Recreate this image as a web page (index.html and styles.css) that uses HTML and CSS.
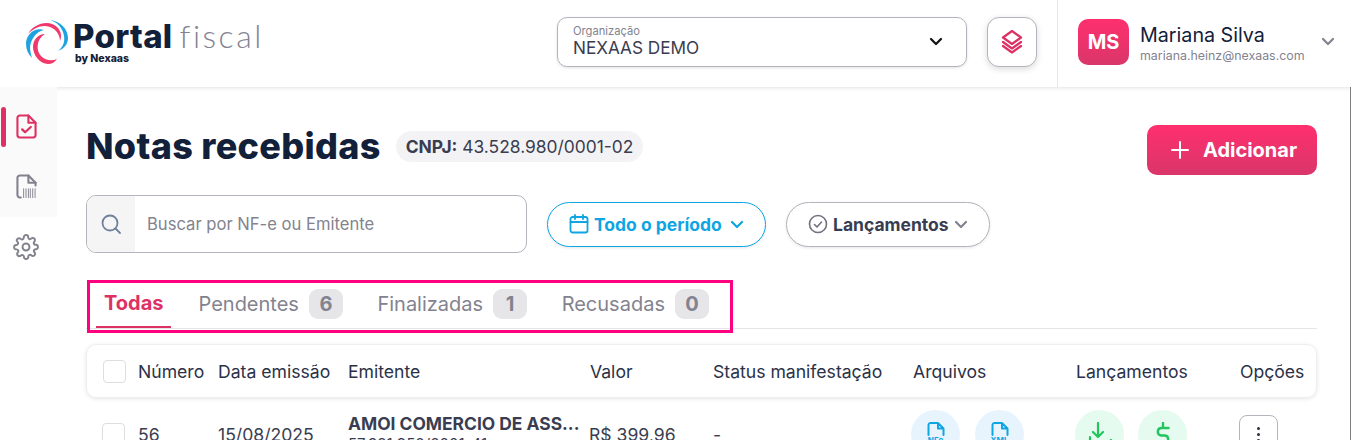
FILE: index.html
```html
<!DOCTYPE html>
<html lang="pt-BR">
<head>
    <meta charset="UTF-8">
    <meta name="viewport" content="width=device-width, initial-scale=1.0">
    <title>Portal Fiscal - Notas recebidas</title>
    <link rel="stylesheet" href="styles.css">
</head>
<body>

    <header class="topbar">
        <div class="logo">
            <svg class="logo-mark" width="46" height="48" viewBox="24 17 46 48">
                <path fill="#f0386b" d="M28 33C34 22 50 18 58 27C61 31 62 35 60 40C60 34 56 28 50 26C42 23 34 27 28 33z"/>
                <path fill="#1fa3e0" d="M50 19C60 20 68 28 68 37C68 43 64 48 58 50C63 46 65 41 64 35C63 27 57 21 50 19z"/>
                <path fill="#1fa3e0" d="M44 29C34 26 26 34 26 43C26 48 28 53 32 57C30 50 29 45 32 39C35 33 39 30 44 29z"/>
                <path fill="#f0386b" d="M45 33C38 33 33 39 33 46C33 54 40 63 48 63C52 63 55 61 57 58C52 60 46 60 41 55C36 50 36 38 45 33z"/>
            </svg>
            <div class="logo-text">
                <div class="logo-name"><span class="logo-portal">Portal</span><span class="logo-fiscal">fiscal</span></div>
                <div class="logo-by">by Nexaas</div>
            </div>
        </div>

        <div class="org-select">
            <div class="org-text">
                <span class="org-label">Organização</span>
                <span class="org-value">NEXAAS DEMO</span>
            </div>
            <svg width="14" height="9" viewBox="0 0 14 9" fill="none" stroke="#111" stroke-width="2.2" stroke-linecap="round" stroke-linejoin="round"><path d="M2 2l5 5 5-5"/></svg>
        </div>

        <button class="layers-btn">
            <svg width="26" height="25" viewBox="0 0 24 25" fill="none" stroke="#de3163" stroke-width="2.200" stroke-linejoin="round" stroke-linecap="round">
                <path d="M12 2l9 6.500-9 6.500-9-6.500z"/>
                <path d="M3 13l9 6.500 9-6.500"/>
                <path d="M3 17l9 6.500 9-6.500"/>
            </svg>
        </button>

        <div class="user">
            <div class="avatar">MS</div>
            <div class="user-text">
                <div class="user-name">Mariana Silva</div>
                <div class="user-mail">mariana.heinz@nexaas.com</div>
            </div>
            <svg width="14" height="9" viewBox="0 0 14 9" fill="none" stroke="#83838f" stroke-width="2.2" stroke-linecap="round" stroke-linejoin="round"><path d="M2 2l5 5 5-5"/></svg>
        </div>
    </header>

    <div class="layout">
        <nav class="sidebar">
            <div class="side-item active">
                <svg width="21" height="25" viewBox="0 0 22 26" fill="none" stroke="#de3163" stroke-width="2.200" stroke-linecap="round" stroke-linejoin="round">
                    <path d="M13 1.500H4A2.500 2.500 0 0 0 1.500 4v18A2.500 2.500 0 0 0 4 24.500h14a2.500 2.500 0 0 0 2.500-2.500V9z"/>
                    <path d="M13 1.500V9h7.500"/>
                    <path d="M6.500 16l3 3 6-5.500" stroke-width="2.400"/>
                </svg>
            </div>
            <div class="side-item">
                <svg width="21" height="25" viewBox="0 0 22 26" fill="none" stroke="#83838f" stroke-width="2.200" stroke-linecap="round" stroke-linejoin="round">
                    <path d="M5 24.500H4A2.500 2.500 0 0 1 1.500 22V4A2.500 2.500 0 0 1 4 1.500h9L20.500 9v3"/>
                    <path d="M13 1.500V9h7.500"/>
                    <path d="M8 15v10M10.500 15v10M13 15v10M15 15v10M17.500 15v10M20 15v10" stroke-width="1" stroke-linecap="butt"/>
                </svg>
            </div>
            <div class="side-item">
                <svg width="26" height="26" viewBox="0 0 24 24" fill="none" stroke="#83838f" stroke-width="1.800" stroke-linecap="round" stroke-linejoin="round">
                    <circle cx="12" cy="12" r="3.200"/>
                    <path d="M19.400 15a1.650 1.650 0 0 0 .33 1.820l.06.060a2 2 0 1 1-2.830 2.830l-.06-.060a1.650 1.650 0 0 0-2.800 1.170V21a2 2 0 1 1-4 0v-.090a1.650 1.650 0 0 0-2.820-1.110l-.06.060a2 2 0 1 1-2.830-2.830l.06-.060a1.650 1.650 0 0 0-1.170-2.800H3a2 2 0 1 1 0-4h.090a1.650 1.650 0 0 0 1.110-2.820l-.06-.060a2 2 0 1 1 2.830-2.830l.06.060a1.650 1.650 0 0 0 1.820.33H9a1.650 1.650 0 0 0 1-1.510V3a2 2 0 1 1 4 0v.090a1.650 1.650 0 0 0 2.800 1.170l.06-.060a2 2 0 1 1 2.830 2.830l-.06.060a1.650 1.650 0 0 0-.33 1.820V9a1.650 1.650 0 0 0 1.510 1H21a2 2 0 1 1 0 4h-.090a1.650 1.650 0 0 0-1.510 1z"/>
                </svg>
            </div>
        </nav>

        <main class="content">
            <div class="title-row">
                <h1>Notas recebidas</h1>
                <span class="cnpj"><b>CNPJ:</b> 43.528.980/0001-02</span>
                <button class="add-btn">
                    <svg width="18" height="18" viewBox="0 0 18 18" stroke="#fff" stroke-width="2" stroke-linecap="round"><path d="M9 1v16M1 9h16"/></svg>
                    Adicionar
                </button>
            </div>

            <div class="filters">
                <div class="search">
                    <div class="search-icon">
                        <svg width="22" height="22" viewBox="0 0 22 22" fill="none" stroke="#71809a" stroke-width="1.800" stroke-linecap="round"><circle cx="10" cy="10" r="7.500"/><path d="M15.500 15.500l4.500 4.500"/></svg>
                    </div>
                    <span class="search-text">Buscar por NF-e ou Emitente</span>
                </div>
                <button class="pill pill-blue">
                    <svg width="20" height="20" viewBox="0 0 20 20" fill="none" stroke="#0ea5e2" stroke-width="1.800" stroke-linecap="round" stroke-linejoin="round"><rect x="1.500" y="3" width="17" height="15.500" rx="2"/><path d="M1.500 8h17M6 1v4M14 1v4"/></svg>
                    Todo o período
                    <svg class="pill-caret" width="14" height="9" viewBox="0 0 14 9" fill="none" stroke="#0ea5e2" stroke-width="2.200" stroke-linecap="round" stroke-linejoin="round"><path d="M2 2l5 5 5-5"/></svg>
                </button>
                <button class="pill pill-gray">
                    <svg width="20" height="20" viewBox="0 0 20 20" fill="none" stroke="#71717f" stroke-width="1.600" stroke-linecap="round" stroke-linejoin="round"><circle cx="10" cy="10" r="8.500"/><path d="M6.500 10.500l2.500 2.500 4.500-5"/></svg>
                    Lançamentos
                    <svg width="14" height="9" viewBox="0 0 14 9" fill="none" stroke="#83838f" stroke-width="2.200" stroke-linecap="round" stroke-linejoin="round"><path d="M2 2l5 5 5-5"/></svg>
                </button>
            </div>

            <div class="tabs-line">
                <div class="tabs">
                    <div class="tab active">Todas</div>
                    <div class="tab">Pendentes <span class="count">6</span></div>
                    <div class="tab">Finalizadas <span class="count">1</span></div>
                    <div class="tab">Recusadas <span class="count">0</span></div>
                </div>
            </div>

            <div class="table-head row">
                <div class="c-check"><span class="checkbox"></span></div>
                <div class="c-num">Número</div>
                <div class="c-date">Data emissão</div>
                <div class="c-issuer">Emitente</div>
                <div class="c-value">Valor</div>
                <div class="c-status">Status manifestação</div>
                <div class="c-files">Arquivos</div>
                <div class="c-launch">Lançamentos</div>
                <div class="c-opts">Opções</div>
            </div>

            <div class="table-row row">
                <div class="c-check"><span class="checkbox"></span></div>
                <div class="c-num">56</div>
                <div class="c-date">15/08/2025</div>
                <div class="c-issuer">
                    <div class="issuer-name">AMOI COMERCIO DE ASS...</div>
                    <div class="issuer-doc">57.981.950/0001-41</div>
                </div>
                <div class="c-value">R$ 399,96</div>
                <div class="c-status">-</div>
                <div class="c-files">
                    <span class="round round-blue">
                        <svg width="18" height="14" viewBox="0 0 18 14" fill="none" stroke="#0ea5e2" stroke-width="2" stroke-linejoin="round" stroke-linecap="round"><path d="M1.500 13V3A2 2 0 0 1 3.500 1H11l5.500 5.500V13M11 1v5.500h5.500"/></svg>
                        <span class="file-tag">NFe</span>
                    </span>
                    <span class="round round-blue">
                        <svg width="18" height="14" viewBox="0 0 18 14" fill="none" stroke="#0ea5e2" stroke-width="2" stroke-linejoin="round" stroke-linecap="round"><path d="M1.500 13V3A2 2 0 0 1 3.500 1H11l5.500 5.500V13M11 1v5.500h5.500"/></svg>
                        <span class="file-tag">XML</span>
                    </span>
                </div>
                <div class="c-launch">
                    <span class="round round-green">
                        <svg width="24" height="26" viewBox="0 0 24 26" fill="none" stroke="#22c55e" stroke-width="2.200" stroke-linecap="round" stroke-linejoin="round"><path d="M10 1v14M5 10l5 5 5-5M2 15v6h9M15 21l3 3 5-6"/></svg>
                    </span>
                    <span class="round round-green">
                        <svg width="14" height="26" viewBox="0 0 14 26" fill="none" stroke="#22c55e" stroke-width="2.400" stroke-linecap="round" stroke-linejoin="round"><path d="M7 1v4M7 21v4M12.500 6H5a3.800 3.800 0 0 0 0 7.500h4a3.800 3.800 0 0 1 0 7.500H1.500"/></svg>
                    </span>
                </div>
                <div class="c-opts">
                    <button class="more-btn"><span></span><span></span><span></span></button>
                </div>
            </div>
        </main>
    </div>

</body>
</html>
```

FILE: styles.css
```css
* {
    box-sizing: border-box;
}
html, body {
    height: 440px;
    overflow: hidden;
}
body {
    margin: 0;
    font-family: Inter, Arial, sans-serif;
    color: #2b2f42;
    background: #fff;
}
button {
    font-family: inherit;
    cursor: pointer;
}

/* header */
.topbar {
    height: 87px;
    display: flex;
    align-items: center;
    background: #fff;
    box-shadow: 0 1px 4px rgba(0, 0, 0, 0.12);
    position: relative;
}
.logo {
    width: 557px;
    padding-left: 24px;
    padding-bottom: 4px;
    display: flex;
    align-items: center;
    gap: 3px;
}
.logo-name {
    display: flex;
    align-items: baseline;
    gap: 7px;
    line-height: 34px;
}
.logo-portal {
    font-weight: 800;
    font-size: 33px;
    letter-spacing: 0.3px;
    color: #12203a;
}
.logo-fiscal {
    font-family: Lato, sans-serif;
    font-weight: 300;
    font-size: 32px;
    letter-spacing: 2.500px;
    color: #83838f;
}
.logo-by {
    font-weight: 800;
    font-size: 10.500px;
    line-height: 12px;
    margin-left: 2px;
    color: #12203a;
}
.org-select {
    width: 410px;
    height: 50px;
    margin-bottom: 4px;
    border: 1px solid #b4b4bc;
    border-radius: 10px;
    box-shadow: 0 1px 3px rgba(0, 0, 0, 0.12);
    padding: 0 23px 0 15px;
    display: flex;
    align-items: center;
    justify-content: space-between;
}
.org-text {
    display: flex;
    flex-direction: column;
}
.org-label {
    font-size: 11.200px;
    line-height: 13px;
    color: #83838f;
}
.org-value {
    font-size: 17.200px;
    line-height: 20px;
    color: #3a3d50;
}
.layers-btn {
    width: 50px;
    height: 50px;
    margin-left: 20px;
    margin-bottom: 4px;
    background: #fff;
    border: 1px solid #b4b4bc;
    border-radius: 12px;
    box-shadow: 0 2px 6px rgba(0, 0, 0, 0.15);
    display: flex;
    align-items: center;
    justify-content: center;
    padding: 0;
}
.user {
    margin-left: 20px;
    height: 87px;
    flex: 1;
    border-left: 1px solid #e6e6e9;
    padding-left: 20px;
    padding-bottom: 4px;
    display: flex;
    align-items: center;
}
.avatar {
    width: 51px;
    height: 46px;
    border-radius: 10px;
    background: linear-gradient(180deg, #ff2f6e, #d9366a);
    color: #fff;
    font-weight: 700;
    font-size: 20px;
    display: flex;
    align-items: center;
    justify-content: center;
}
.user-text {
    margin-left: 11px;
    width: 181px;
    padding-top: 4px;
}
.user-name {
    font-size: 19.700px;
    line-height: 23px;
    color: #12203a;
}
.user-mail {
    font-size: 12.400px;
    line-height: 17px;
    color: #83838f;
}

/* page */
.layout {
    display: flex;
    height: 353px;
    border-right: 1px solid #7f7f7f;
}
.sidebar {
    width: 57px;
    height: 130px;
    flex-shrink: 0;
    background: #fafafa;
    position: relative;
}
.side-item {
    display: flex;
    justify-content: center;
    padding-right: 5px;
    height: 60px;
}
.side-item:first-child {
    padding-top: 27px;
    height: 87px;
}
.side-item.active::before {
    content: "";
    position: absolute;
    left: 1px;
    top: 20px;
    width: 5px;
    height: 40px;
    border-radius: 3px;
    background: #de3163;
}
.content {
    flex: 1;
    padding: 38px 33px 0 29px;
}
.title-row {
    display: flex;
    align-items: center;
    height: 50px;
}
h1 {
    margin: 0 0 8px;
    font-weight: 800;
    font-size: 36px;
    letter-spacing: 0.300px;
    color: #12203a;
}
.cnpj {
    margin-left: 15px;
    margin-bottom: 8px;
    background: #f3f3f5;
    border-radius: 16px;
    height: 31px;
    padding: 0 10px;
    font-size: 17.400px;
    line-height: 31px;
    color: #3a3d50;
}
.add-btn {
    margin-left: auto;
    width: 170px;
    height: 50px;
    border: none;
    border-radius: 10px;
    background: linear-gradient(180deg, #ff2f6e, #d9366a);
    color: #fff;
    font-weight: 700;
    font-size: 20px;
    display: flex;
    align-items: center;
    justify-content: center;
    gap: 14px;
    padding: 0 0 0 4px;
}
.filters {
    display: flex;
    align-items: center;
    margin-top: 20px;
}
.search {
    width: 441px;
    height: 58px;
    border: 1px solid #b4b4bc;
    border-radius: 10px;
    display: flex;
    align-items: center;
    overflow: hidden;
}
.search-icon {
    width: 48px;
    height: 100%;
    background: #f5f5f6;
    display: flex;
    align-items: center;
    justify-content: center;
}
.search-text {
    margin-left: 12px;
    font-size: 16.600px;
    color: #83838f;
}
.pill {
    height: 45px;
    border-radius: 23px;
    background: #fff;
    font-weight: 700;
    font-size: 17.500px;
    display: flex;
    align-items: center;
    padding: 0;
    box-shadow: 0 1px 3px rgba(0, 0, 0, 0.1);
}
.pill-blue {
    width: 219px;
    margin-left: 20px;
    border: 1px solid #0ea5e2;
    color: #0ea5e2;
    padding-left: 21px;
    gap: 5px;
}
.pill-caret {
    margin-left: 3px;
}
.pill-gray {
    width: 204px;
    margin-left: 20px;
    border: 1px solid #b4b4bc;
    color: #3a3d50;
    padding-left: 21px;
    gap: 5px;
}
.tabs-line {
    margin-top: 27px;
    border-bottom: 1px solid #e6e6e9;
    height: 49px;
}
.tabs {
    display: inline-flex;
    align-items: flex-start;
    width: 646px;
    height: 53px;
    margin-left: 1px;
    border: 3px solid #ff007f;
    padding-left: 6px;
    position: relative;
}
.tab {
    font-size: 20px;
    color: #83838f;
    display: flex;
    align-items: center;
    height: 45px;
    padding-bottom: 3px;
    margin-right: 34.500px;
    gap: 10px;
    white-space: nowrap;
}
.tab.active {
    font-weight: 700;
    color: #de3163;
    padding: 0 8px 3px;
    border-bottom: 2px solid #de3163;
    margin-right: 27px;
}
.count {
    width: 34px;
    height: 30px;
    border-radius: 9px;
    background: #e6e6e9;
    font-weight: 700;
    font-size: 20px;
    display: flex;
    align-items: center;
    justify-content: center;
}

/* table */
.row {
    display: flex;
    align-items: center;
    font-size: 17.600px;
}
.table-head {
    margin-top: 15px;
    height: 54px;
    border-radius: 10px;
    border: 1px solid #eeeeef;
    box-shadow: 0 1px 4px rgba(0, 0, 0, 0.1);
    color: #2b3147;
}
.table-row {
    margin-top: 1px;
    height: 70px;
    padding-left: 1px;
    color: #3a3d50;
}
.checkbox {
    display: block;
    width: 23px;
    height: 23px;
    border: 1px solid #dedee2;
    border-radius: 4px;
    background: #fff;
}
.c-check {
    width: 51px;
    padding-left: 16px;
    flex-shrink: 0;
}
.table-row .c-check {
    margin-left: -1px;
    margin-right: 1px;
}
.c-num {
    width: 80px;
}
.c-date {
    width: 130px;
}
.c-issuer {
    width: 242px;
}
.c-value {
    width: 123px;
}
.table-row .c-value {
    margin-left: -1px;
    margin-right: 1px;
}
.c-status {
    width: 200px;
}
.c-files {
    width: 163px;
}
.c-launch {
    width: 164px;
}
.table-row .c-files {
    display: flex;
    gap: 15px;
    margin-left: -2px;
    margin-right: 2px;
}
.table-row .c-launch {
    display: flex;
    gap: 14px;
    margin-left: -1px;
    margin-right: 1px;
}
.c-opts {
    flex: 1;
}
.table-row .c-opts {
    margin-left: -1px;
}
.issuer-name {
    font-weight: 700;
    font-size: 17.400px;
    line-height: 20px;
    white-space: nowrap;
}
.issuer-doc {
    font-size: 15px;
    line-height: 20px;
}
.round {
    width: 49px;
    height: 49px;
    border-radius: 50%;
    display: flex;
    flex-direction: column;
    align-items: center;
    justify-content: flex-start;
    padding-top: 12px;
}
.round-blue {
    background: #e8f4fd;
}
.round-green {
    background: #e6fbef;
}
.file-tag {
    font-size: 8px;
    font-weight: 700;
    line-height: 9px;
    color: #0ea5e2;
}
.more-btn {
    width: 39px;
    height: 39px;
    background: #fff;
    border: 1px solid #b4b4bc;
    border-radius: 8px;
    display: flex;
    flex-direction: column;
    align-items: center;
    justify-content: center;
    gap: 3px;
    padding: 0;
}
.more-btn span {
    width: 3px;
    height: 3px;
    border-radius: 50%;
    background: #2b2f42;
}
```
